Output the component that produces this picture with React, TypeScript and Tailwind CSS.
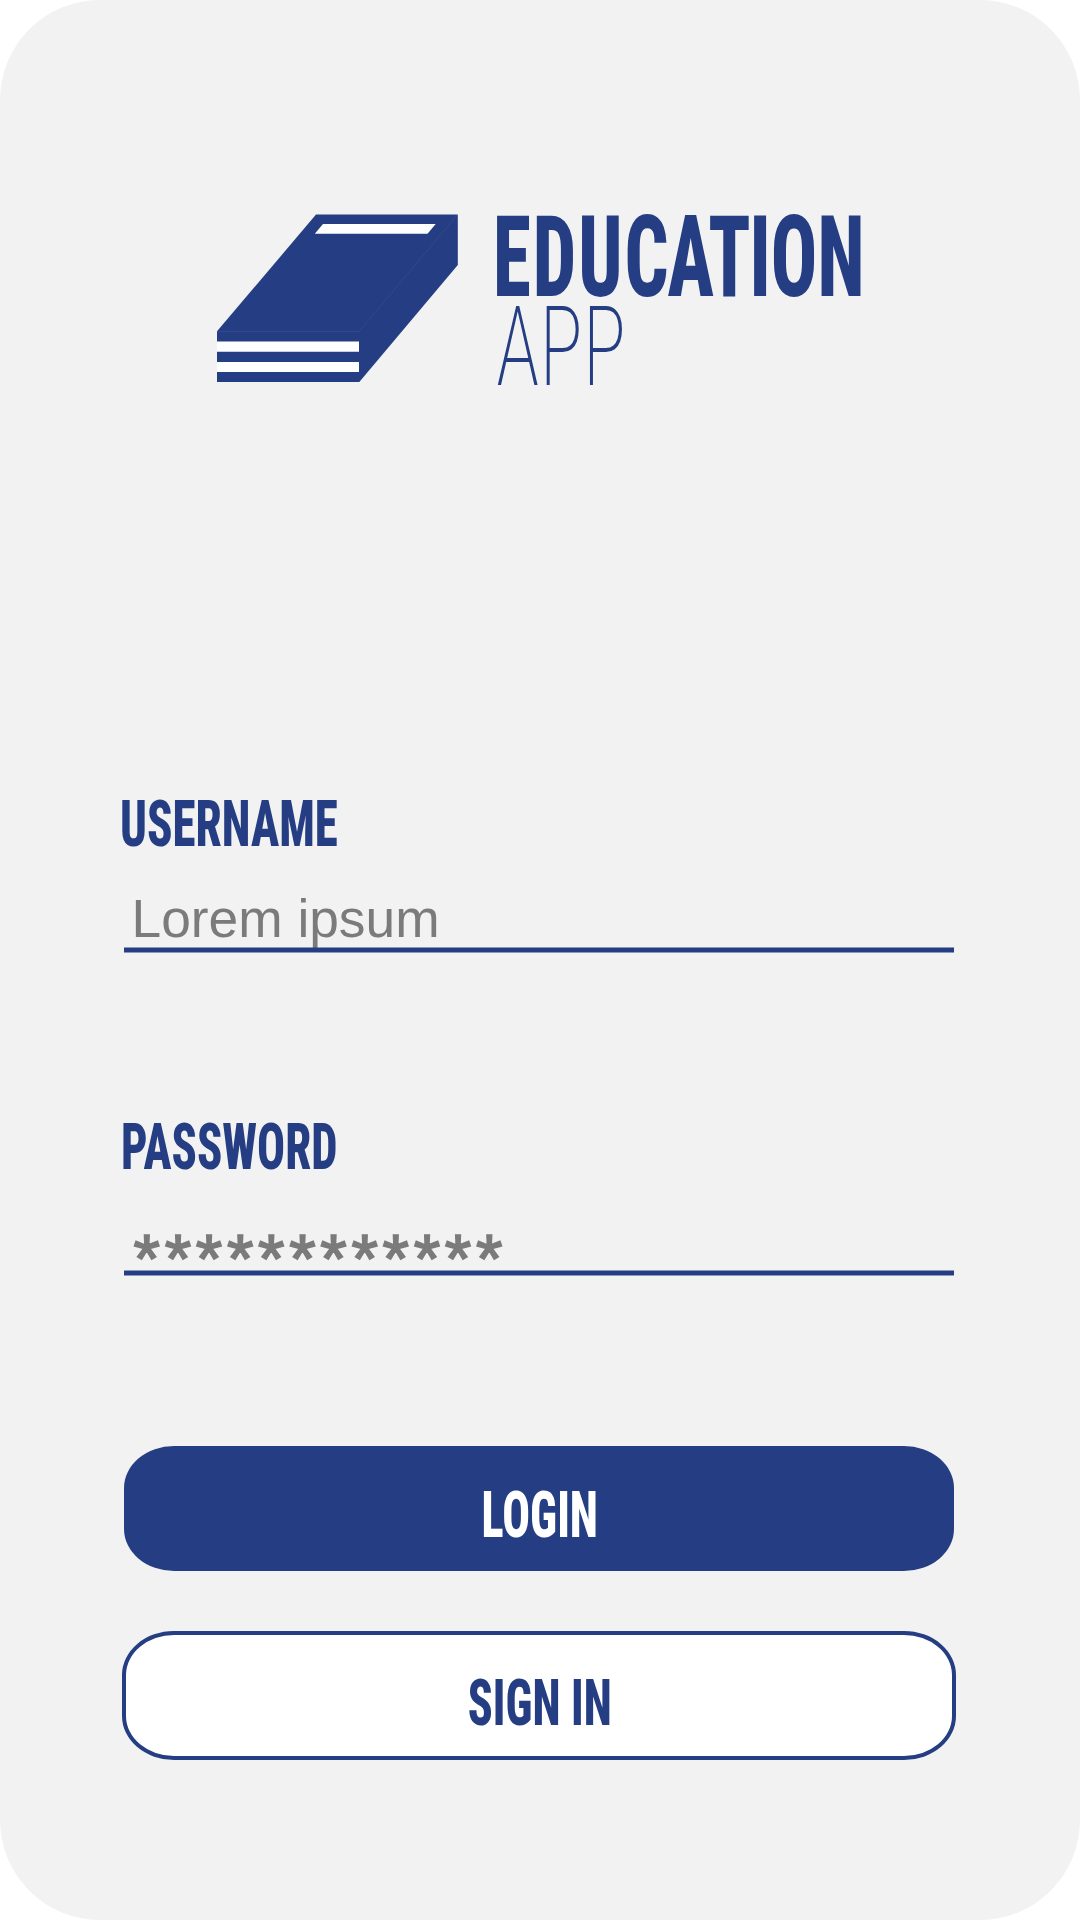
import type { ReactNode } from 'react';

function BookLogo() {
  return (
    <svg className="h-[168px] w-[242px] shrink-0" viewBox="0 0 242 168" aria-hidden="true">
      <path d="M99 .6H240.800V51L142.300 168H0V117.300Z" fill="#253e83" />
      <path d="M0 117.500H142L240.500 .6" fill="none" stroke="#fff" strokeOpacity=".08" strokeWidth=".8" />
      <path d="M106 10H218.700L210.500 19.700H97.800Z" fill="#fff" />
      <path d="M0 127.500H142V137.700H0ZM0 148H142V158H0Z" fill="#fff" />
    </svg>
  );
}

function Field({ label, children }: { label: ReactNode; children: ReactNode }) {
  return (
    <div className="flex h-[161px] w-[829.5px] flex-col">
      <div className="flex h-[66px] items-start font-['Roboto',sans-serif] text-[65.6px] leading-[66px] font-[800] text-[#253e83] [font-stretch:75%]">
        {label}
      </div>
      <div className="flex h-[90px] items-start">{children}</div>
      <div className="h-[5px] shrink-0 translate-y-[0.5px] bg-[#253e83]" />
    </div>
  );
}

export default function App() {
  return (
    <main className="flex h-[1920px] w-[1080px] flex-col overflow-hidden rounded-[100px] bg-[#f2f2f2] pt-[214px]">
      <header className="flex h-[170px] items-start pl-[217px]">
        <BookLogo />
        <div className="-mt-[1px] ml-[34px] flex flex-col items-start font-['Roboto',sans-serif] text-[#253e83] [font-stretch:75%]">
          <h1 className="h-[89px] origin-left scale-x-[0.686] text-[112.5px] leading-[90px] font-[800]">
            <span className="tracking-[2.9px]">EDU</span>
            <span className="tracking-[-1.6px]">CAT</span>
            <span>ION</span>
          </h1>
          <span className="ml-[3px] h-[90px] origin-left scale-x-[0.725] text-[111.8px] leading-[90px] font-[200]">APP</span>
        </div>
      </header>

      <form className="mt-[407px] flex flex-col pl-[124px]">
        <Field label={<span className="-ml-[4px] origin-left scale-x-[0.716]">USERNAME</span>}>
          <span className="pt-[31.5px] pl-[7.5px] font-['Liberation_Sans',sans-serif] text-[53.3px] leading-[60px] text-[#7b7b7b]">Lorem ipsum</span>
        </Field>
        <div className="h-[162px]" />
        <Field label={<span className="-ml-[3.5px] origin-left scale-x-[0.71]">PASSWORD</span>}>
          <span className="pt-[48px] pl-[9.5px] font-['Liberation_Sans',sans-serif] text-[68px] leading-[60px] tracking-[4.67px] text-[#7b7b7b] [-webkit-text-stroke:1.7px_#7b7b7b]">************</span>
        </Field>

        <button type="button" className="mt-[171px] flex h-[125px] w-[830px] items-center justify-center rounded-[50px/42px] bg-[#253e83] pt-[13px] pl-[1px] font-['Roboto',sans-serif] text-[65.6px] leading-[66px] font-[800] text-white [font-stretch:75%]">
          <span className="scale-x-[0.703]">LOGIN</span>
        </button>
        <button type="button" className="mt-[60px] -ml-[2px] flex h-[129px] w-[834px] items-center justify-center rounded-[52px/44px] border-4 border-[#253e83] bg-white pt-[14px] pl-[1px] font-['Roboto',sans-serif] text-[65.6px] leading-[66px] font-[800] text-[#253e83] [font-stretch:75%]">
          <span className="scale-x-[0.7]">SIGN IN</span>
        </button>
      </form>
    </main>
  );
}
